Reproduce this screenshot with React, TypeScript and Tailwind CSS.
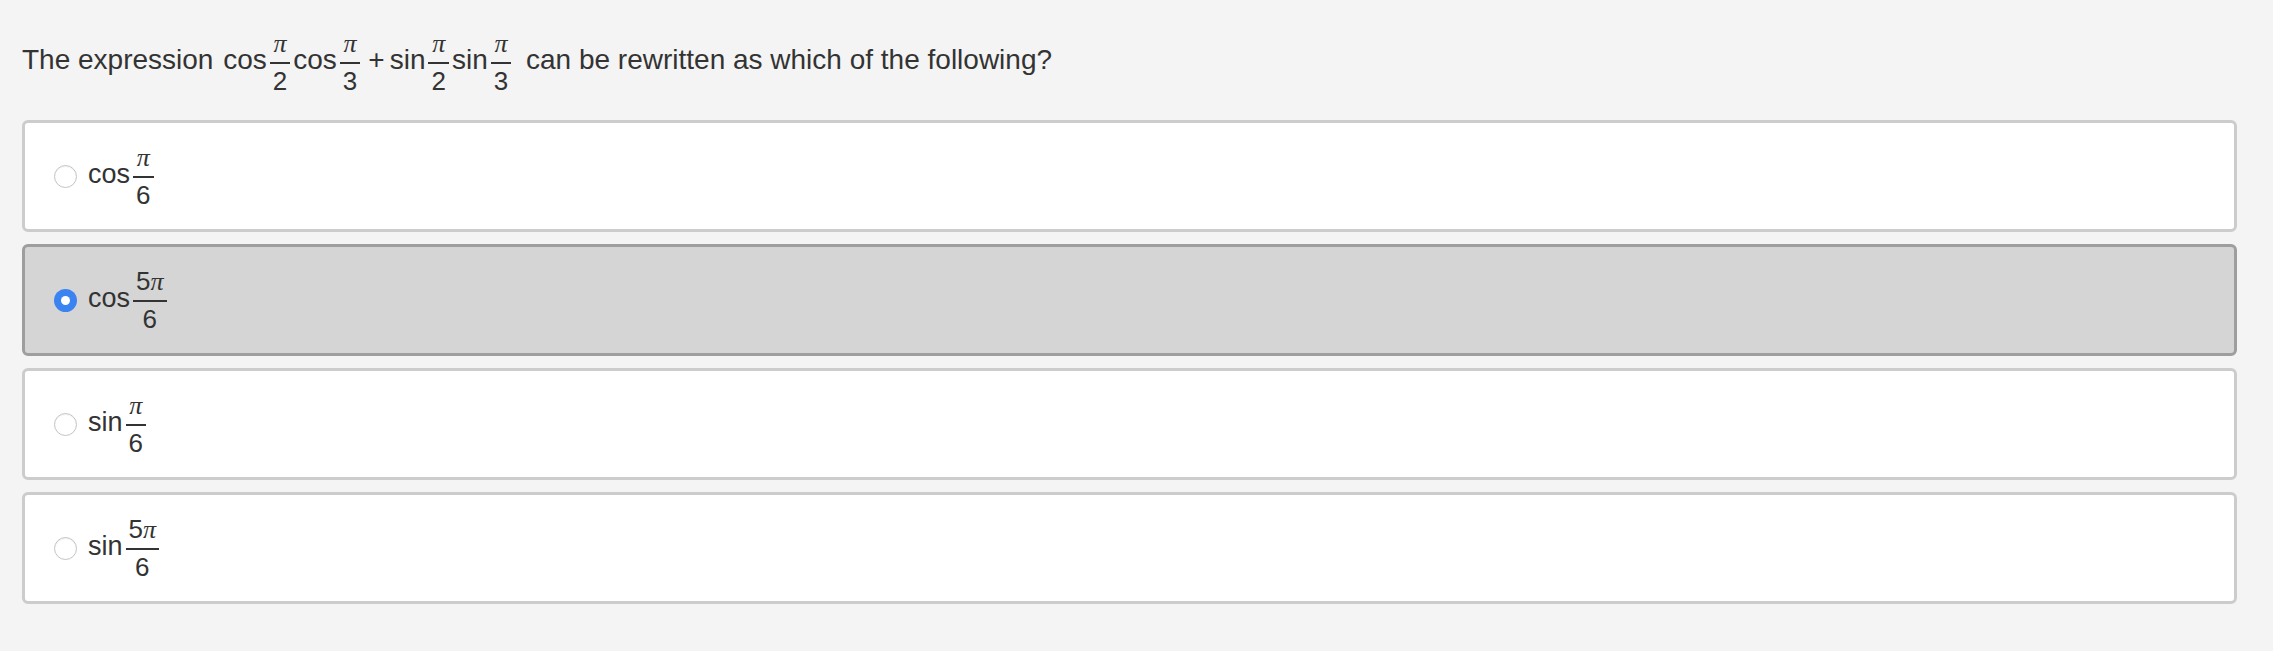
import React from "react";

const font = "font-['Liberation_Sans','Helvetica',Arial,sans-serif]";

function Pi() {
  return <span className="italic font-['Liberation_Serif','Times_New_Roman',serif]">π</span>;
}

interface FracProps {
  num: React.ReactNode;
  den: React.ReactNode;
}

function Frac({ num, den }: FracProps) {
  return (
    <span className="inline-flex flex-col items-center align-middle mx-[3px] text-[26px]">
      <span className="leading-none pb-[5px] px-[3px]">{num}</span>
      <span className="block h-[2px] w-full bg-[#333]" />
      <span className="leading-none pt-[4px] px-[3px]">{den}</span>
    </span>
  );
}

const options = [
  { fn: "cos", num: <Pi />, selected: false },
  { fn: "cos", num: <>5<Pi /></>, selected: true },
  { fn: "sin", num: <Pi />, selected: false },
  { fn: "sin", num: <>5<Pi /></>, selected: false },
];

function Radio({ checked }: { checked: boolean }) {
  if (checked) {
    return (
      <span className="flex h-[23px] w-[23px] shrink-0 items-center justify-center rounded-full bg-[#3b83f1]">
        <span className="h-[9px] w-[9px] rounded-full bg-white" />
      </span>
    );
  }
  return (
    <span className="h-[23px] w-[23px] shrink-0 rounded-full border border-[#c4c4c4] bg-white shadow-[inset_0_1px_1px_rgba(0,0,0,0.06)]" />
  );
}

export default function App() {
  return (
    <div className={`min-h-[651px] bg-[#f4f4f4] pl-[22px] pr-[36px] pt-[30px] text-[#333] ${font}`}>
      <div className="text-[28px] leading-[normal] h-[90px]">
        The expression{" "}
        <span className="ml-[2px]">cos</span>
        <Frac num={<Pi />} den="2" />
        <span>cos</span>
        <Frac num={<Pi />} den="3" />
        <span className="mx-[5px]">+</span>
        <span>sin</span>
        <Frac num={<Pi />} den="2" />
        <span>sin</span>
        <Frac num={<Pi />} den="3" />{" "}
        <span className="ml-[4px]">can be rewritten as which of the following?</span>
      </div>

      <div className="flex flex-col gap-[12px]">
        {options.map((o, i) => (
          <div
            key={i}
            className={`flex h-[112px] items-center rounded-[6px] border-[3px] pl-[29px] ${
              o.selected ? "border-[#9e9e9e] bg-[#d5d5d5]" : "border-[#cccccc] bg-white"
            }`}
          >
            <Radio checked={o.selected} />
            <div className="ml-[11px] text-[27px] leading-[normal]">
              <span>{o.fn}</span>
              <Frac num={o.num} den="6" />
            </div>
          </div>
        ))}
      </div>
    </div>
  );
}
